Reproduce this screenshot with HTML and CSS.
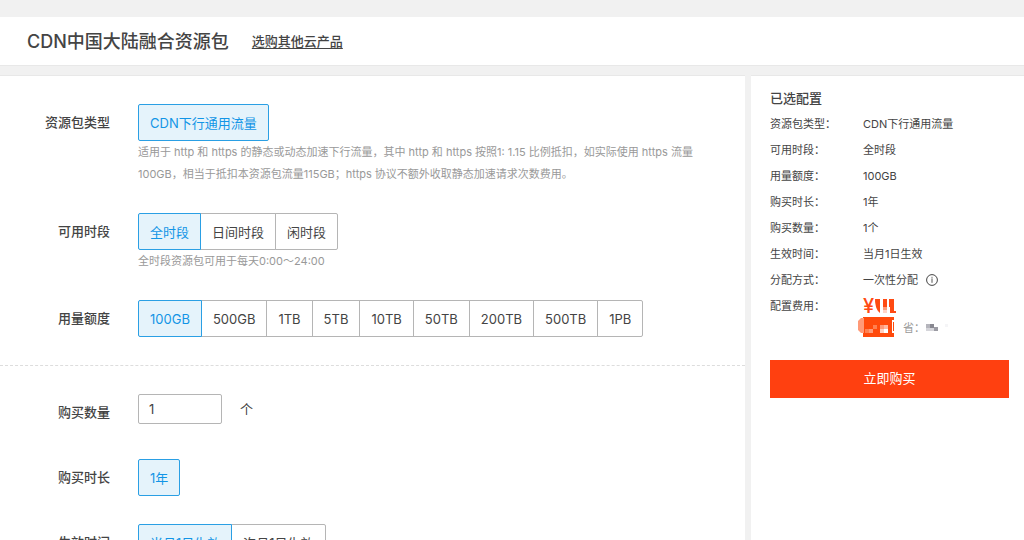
FILE: index.html
```html
<!DOCTYPE html>
<html lang="zh-CN">
<head>
<meta charset="UTF-8">
<meta name="viewport" content="width=device-width, initial-scale=1.0">
<title>CDN中国大陆融合资源包</title>
<link rel="stylesheet" href="styles.css">
</head>
<body>
<header class="header">
  <h1>CDN中国大陆融合资源包</h1>
  <a href="#">选购其他云产品</a>
</header>

<div class="layout">
  <main class="panel">
    <section class="group">
      <div class="row">
        <span class="label" id="type">资源包类型</span>
        <div class="field">
          <div class="options" role="group" aria-labelledby="type">
            <button type="button" class="option active">CDN下行通用流量</button>
          </div>
          <p class="hint">适用于 http 和 https 的静态或动态加速下行流量，其中 http 和 https 按照1: 1.15 比例抵扣，如实际使用 https 流量100GB，相当于抵扣本资源包流量115GB；https 协议不额外收取静态加速请求次数费用。</p>
        </div>
      </div>
      <div class="row">
        <span class="label" id="period">可用时段</span>
        <div class="field">
          <div class="options" role="group" aria-labelledby="period">
            <button type="button" class="option active">全时段</button>
            <button type="button" class="option">日间时段</button>
            <button type="button" class="option">闲时段</button>
          </div>
          <p class="hint">全时段资源包可用于每天0:00～24:00</p>
        </div>
      </div>
      <div class="row">
        <span class="label" id="quota">用量额度</span>
        <div class="field">
          <div class="options" role="group" aria-labelledby="quota">
            <button type="button" class="option active">100GB</button>
            <button type="button" class="option">500GB</button>
            <button type="button" class="option">1TB</button>
            <button type="button" class="option">5TB</button>
            <button type="button" class="option">10TB</button>
            <button type="button" class="option">50TB</button>
            <button type="button" class="option">200TB</button>
            <button type="button" class="option">500TB</button>
            <button type="button" class="option">1PB</button>
          </div>
        </div>
      </div>
    </section>

    <section class="group">
      <div class="row">
        <label class="label" for="count">购买数量</label>
        <div class="field count">
          <input type="text" id="count" value="1">
          <span>个</span>
        </div>
      </div>
      <div class="row">
        <span class="label" id="duration">购买时长</span>
        <div class="field">
          <div class="options" role="group" aria-labelledby="duration">
            <button type="button" class="option active">1年</button>
          </div>
        </div>
      </div>
      <div class="row">
        <span class="label" id="start">生效时间</span>
        <div class="field">
          <div class="options" role="group" aria-labelledby="start">
            <button type="button" class="option active">当月1日生效</button>
            <button type="button" class="option">次月1日生效</button>
          </div>
        </div>
      </div>
    </section>
  </main>

  <aside class="panel summary">
    <h2>已选配置</h2>
    <dl>
      <dt>资源包类型：</dt><dd>CDN下行通用流量</dd>
      <dt>可用时段：</dt><dd>全时段</dd>
      <dt>用量额度：</dt><dd>100GB</dd>
      <dt>购买时长：</dt><dd>1年</dd>
      <dt>购买数量：</dt><dd>1个</dd>
      <dt>生效时间：</dt><dd>当月1日生效</dd>
      <dt>分配方式：</dt>
      <dd>一次性分配
        <svg width="12" height="12" viewBox="0 0 12 12" aria-hidden="true">
          <circle cx="6" cy="6" r="5.4" fill="none" stroke="#444" stroke-width="1"/>
          <path d="M6 4.4v4.4M6 2.8v1" stroke="#555" stroke-width="1"/>
        </svg>
      </dd>
      <dt>配置费用：</dt>
      <dd class="price">¥
        <svg width="22" height="16" viewBox="0 0 22 16" aria-hidden="true">
          <path d="M0 1h5v14C2 13 0 8 0 1z" fill="#ff4a12"/>
          <path d="M8 1h4v8H8z" fill="#ff4a12"/>
          <path d="M8 9h4v3H8z" fill="#ff9a78"/>
          <path d="M8 12h4v3H8z" fill="#ffd5c8"/>
          <path d="M14 1h5v12h2v2h-6V9h-1z" fill="#ff4a12"/>
        </svg>
      </dd>
    </dl>
    <div class="saving">
      <svg width="36" height="20" viewBox="0 0 36 20" aria-hidden="true">
        <path d="M5 0h31v20H5z" fill="#ff4a0c"/>
        <path d="M3 1h3v15H3L0 13V4z" fill="#ff9a78"/>
        <path d="M7 12h4v4H7zM15 8h4v4h-4z" fill="#ff8050"/>
        <path d="M11 12h4v4h-4zM22 8h4v4h-4z" fill="#ff9a78"/>
        <path d="M22 12h4v4h-4z" fill="#ffd0c0"/>
        <path d="M26 8h4v4h-4z" fill="#ffb8a0"/>
        <path d="M26 12h4v4h-4z" fill="#fff"/>
        <path d="M34 3h2v2h-1v9h1v2h-2z" fill="#fff"/>
      </svg>
      <span>省：</span>
      <svg width="24" height="10" viewBox="0 0 24 10" aria-hidden="true">
        <path d="M1 2h4v4H1z" fill="#b5b5bc"/>
        <path d="M5 2h4v4H5z" fill="#888890"/>
        <path d="M1 6h4v3H1zM5 6h4v3H5z" fill="#d5d5da"/>
        <path d="M9 5h4v4H9z" fill="#9b9ba3"/>
        <path d="M20 2h3v3h-3z" fill="#f5f5f7"/>
      </svg>
    </div>
    <button type="button" class="buy">立即购买</button>
  </aside>
</div>
</body>
</html>
```

FILE: styles.css
```css
* {
  box-sizing: border-box;
}
html {
  overflow: hidden;
}
body {
  margin: 0;
  padding-top: 17px;
  background-color: #f1f1f1;
  color: #444;
  font-family: Inter, "Noto Sans CJK SC", sans-serif;
  font-size: 13px;
}
button, input {
  font: inherit;
  color: inherit;
}
h1, h2, p, dl, dd {
  margin: 0;
}
.header {
  display: flex;
  align-items: center;
  gap: 23px;
  height: 49px;
  padding: 0 27px 2px;
  border-bottom: 1px solid #e8e8e8;
  background-color: #fff;
}
.header h1 {
  font-size: 18px;
  font-weight: 500;
}
.header a {
  color: #444;
  font-weight: 500;
  text-underline-offset: 2px;
}
.layout {
  display: grid;
  grid-template-columns: 1fr 273px;
  gap: 6px;
  margin-top: 9px;
}
.panel {
  border-top: 1px solid #e8e8e8;
  background-color: #fff;
}

/* Option form */
.group {
  display: flex;
  flex-direction: column;
  gap: 28px;
  padding: 28px 0;
}
.group + .group {
  border-top: 1px dashed #ddd;
}
.row {
  display: grid;
  grid-template-columns: 110px 1fr;
  column-gap: 28px;
  min-height: 37px;
}
.label {
  font-weight: 500;
  line-height: 37px;
  text-align: right;
}
.field {
  padding-right: 28px;
}
.options {
  display: flex;
}
.option {
  height: 37px;
  padding: 0 11px;
  border: 1px solid #b5b5b5;
  background-color: #fff;
  white-space: nowrap;
  cursor: pointer;
}
.option + .option {
  margin-left: -1px;
}
.option:first-child {
  border-radius: 2px 0 0 2px;
}
.option:last-child {
  border-radius: 0 2px 2px 0;
}
.option:only-child {
  border-radius: 2px;
}
.option.active {
  z-index: 1;
  border-color: #2a9fe4;
  background-color: #e5f3fb;
  color: #1295e6;
}
.hint {
  color: #999;
  font-size: 11px;
  line-height: 22px;
}
.count {
  display: flex;
  align-items: flex-start;
  gap: 18px;
  line-height: 30px;
}
.count input {
  width: 84px;
  height: 30px;
  padding: 0 10px;
  border: 1px solid #b5b5b5;
  border-radius: 2px;
}

/* Selected configuration */
.summary {
  padding: 9px 15px 18px 19px;
  font-size: 11px;
}
.summary h2 {
  font-size: 13px;
  font-weight: 500;
  line-height: 26px;
}
.summary dl {
  display: grid;
  grid-template-columns: 93px 1fr;
  line-height: 26px;
}
.summary dd {
  display: flex;
  align-items: center;
  gap: 8px;
}
.summary .price {
  gap: 1px;
  color: #ff4a12;
  font-size: 20px;
  font-weight: 500;
}
.saving {
  display: flex;
  align-items: center;
  gap: 9px;
  height: 15px;
  margin-left: 88px;
  color: #999;
}
.saving span {
  margin-right: -9px;
}
.buy {
  width: 100%;
  height: 38px;
  margin-top: 26px;
  padding: 0 0 4px;
  border: 0;
  background-color: #ff4010;
  color: #fff;
  font-size: 13px;
  cursor: pointer;
}
```
